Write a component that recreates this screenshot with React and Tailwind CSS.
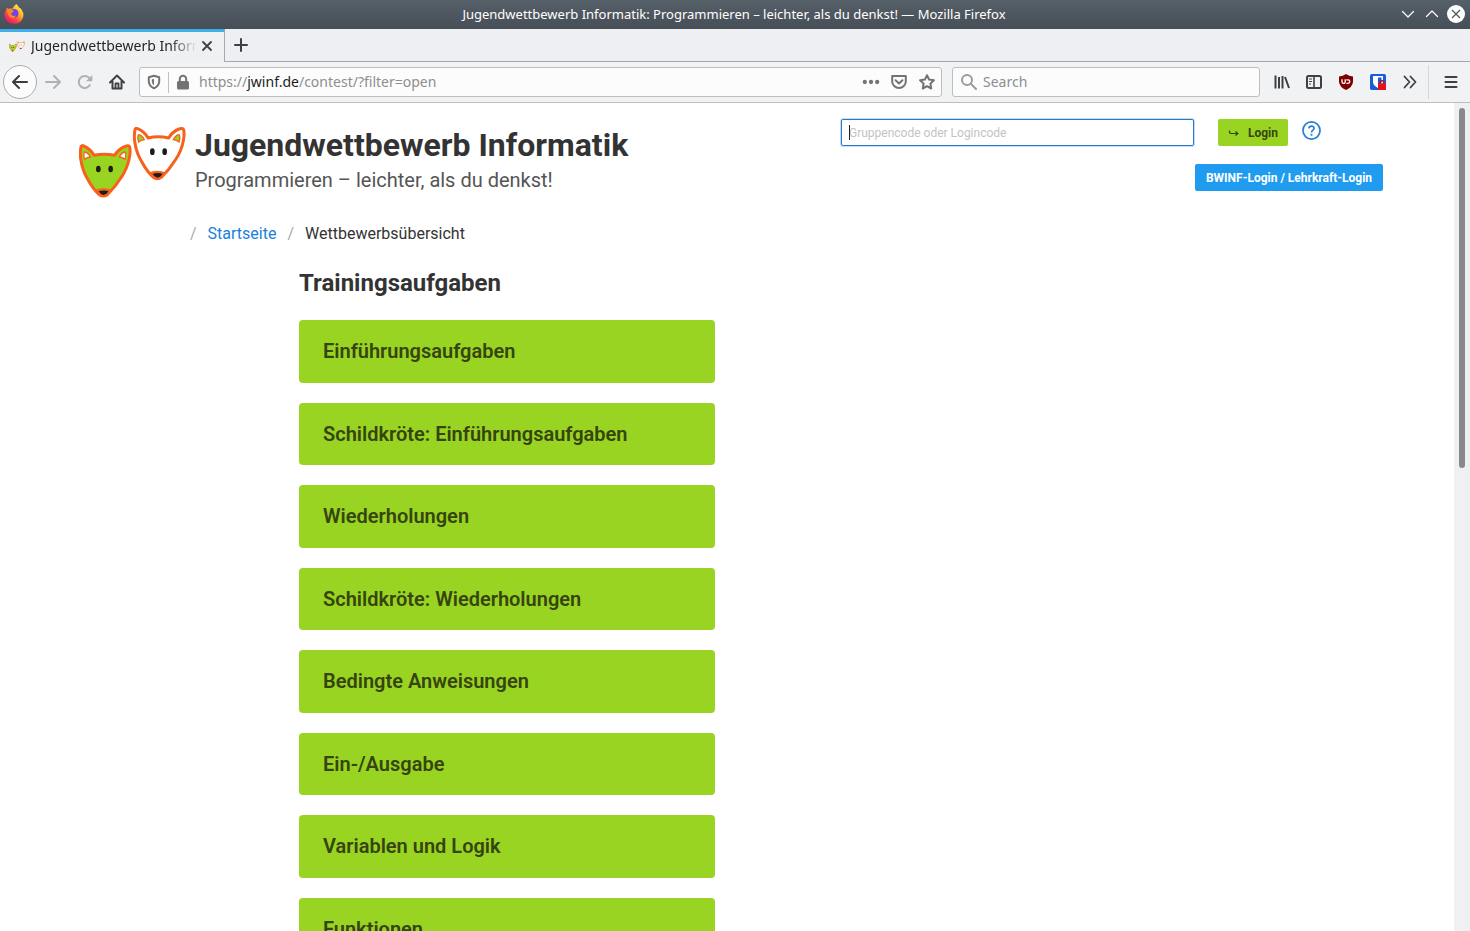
import React from "react";

const tasks = [
  "Einführungsaufgaben",
  "Schildkröte: Einführungsaufgaben",
  "Wiederholungen",
  "Schildkröte: Wiederholungen",
  "Bedingte Anweisungen",
  "Ein-/Ausgabe",
  "Variablen und Logik",
  "Funktionen",
];

function FoxHead({ fill, inner, x, y }) {
  return (
    <g transform={`translate(${x} ${y})`}>
      <path
        d="M6 6 Q2 30 6 48 Q11 79 27 105 Q43 134 61 150 Q73 158 85 150 Q109 127 127 98 Q146 69 151 40 Q155 20 152 7 Q150 1 138 5 Q117 14 107 32 Q76 25 45 32 Q34 12 14 4 Q8 1 6 6Z"
        fill={fill}
        stroke="#f8611c"
        strokeWidth="9"
        strokeLinejoin="round"
      />
      <path d="M17 44 Q12 28 17 22 Q28 24 34 37 Q24 38 17 44Z" fill={inner} stroke="#f8611c" strokeWidth="4" />
      <path d="M138 44 Q143 28 138 22 Q127 24 121 37 Q131 38 138 44Z" fill={inner} stroke="#f8611c" strokeWidth="4" />
      <path d="M46 136 Q73 125 100 136 Q88 150 73 154 Q58 150 46 136Z" fill="#f8611c" />
      <path d="M59 140 Q73 135 88 139 Q84 149 73 151 Q64 149 59 140Z" fill="#1c1c1c" />
      <ellipse cx="58" cy="73" rx="7" ry="10" fill="#1c1c1c" />
      <ellipse cx="95" cy="73" rx="7" ry="10" fill="#1c1c1c" />
    </g>
  );
}

function Foxes({ className }) {
  return (
    <svg viewBox="0 0 321 213" className={className} aria-hidden="true">
      <FoxHead fill="#99d422" inner="#fff" x={0} y={53} />
      <FoxHead fill="#fff" inner="#99d422" x={162} y={1} />
    </svg>
  );
}

function FirefoxLogo() {
  return (
    <svg viewBox="0 0 20 20" className="size-5" aria-hidden="true">
      <defs>
        <linearGradient id="ff-body" x1="0.85" y1="0.1" x2="0.2" y2="0.95">
          <stop offset="0" stopColor="#fff04a" />
          <stop offset="0.35" stopColor="#ffb028" />
          <stop offset="0.65" stopColor="#ff4a3d" />
          <stop offset="1" stopColor="#e5127c" />
        </linearGradient>
      </defs>
      <path
        d="M12.300 0 Q14 1 15 3.500 Q17 4 18 6.500 Q20 9 19.400 12 Q18 19.500 10.300 19.800 Q2 19.500 .6 12.500 Q0 8.500 2.200 5.500 L3 3.500 L4.500 5 Q6.500 4.200 8.500 4.800 Q9.500 2 12.300 0Z"
        fill="url(#ff-body)"
      />
      <circle cx="10" cy="9.500" r="4.500" fill="#7542e5" />
      <path d="M3.500 5 Q6 4 7.500 5.800 L10 7 Q9 8.500 7.500 8.800 Q6.500 10.500 8.200 11.600 Q10 12.300 12 11.500 Q11 14 9 14.200 Q5.500 14 4 10.800 Q3 8 3.500 5Z" fill="#ff8a1c" />
    </svg>
  );
}

function Icon({ children, className = "size-4" }) {
  return (
    <svg
      viewBox="0 0 16 16"
      className={className}
      fill="none"
      stroke="currentColor"
      strokeWidth="2"
      strokeLinecap="round"
      strokeLinejoin="round"
      aria-hidden="true"
    >
      {children}
    </svg>
  );
}

function ToolButton({ label, children, className = "text-[#3f4042]" }) {
  return (
    <button type="button" aria-label={label} className={`flex size-8 shrink-0 items-center justify-center ${className}`}>
      {children}
    </button>
  );
}

function FieldButton({ label, children }) {
  return (
    <button type="button" aria-label={label} className="flex h-7 w-7 shrink-0 items-center justify-center text-[#737373]">
      {children}
    </button>
  );
}

function TitleBar() {
  return (
    <div className="flex h-[29px] shrink-0 items-center bg-gradient-to-b from-[#566069] to-[#464e56] pb-px text-white">
      <div className="flex w-[72px] pl-1">
        <FirefoxLogo />
      </div>
      <div className="flex-1 truncate text-center text-[13px] leading-5">
        Jugendwettbewerb Informatik: Programmieren – leichter, als du denkst! — Mozilla Firefox
      </div>
      <div className="flex w-[74px] items-center">
        <button type="button" aria-label="Minimieren" className="flex w-6 justify-center">
          <Icon><path d="M2.500 5.500 8 11l5.500-5.500" strokeWidth="1.200" /></Icon>
        </button>
        <button type="button" aria-label="Maximieren" className="flex w-6 justify-center">
          <Icon><path d="M2.500 10.500 8 5l5.500 5.500" strokeWidth="1.200" /></Icon>
        </button>
        <button type="button" aria-label="Schließen" className="flex w-6 justify-center">
          <svg viewBox="0 0 18 18" className="size-[18px]" aria-hidden="true">
            <circle cx="9" cy="9" r="9" fill="#fff" />
            <path d="M5 5l8 8M13 5l-8 8" stroke="#4a535b" strokeWidth="1.200" />
          </svg>
        </button>
      </div>
    </div>
  );
}

function TabBar() {
  return (
    <div className="flex h-[33px] shrink-0 bg-[#eeeff2]">
      <div className="flex w-[225px] items-center border-t-3 border-r border-t-[#3daee9] border-r-[#a6a9ab] bg-[#eff0f2] pb-[2px] pl-[9px]">
        <Foxes className="h-[11px] w-4" />
        <div className="ml-[6px] w-[166px] overflow-hidden text-[14px] leading-5 whitespace-nowrap text-[#232629] [mask-image:linear-gradient(to_right,#000_84%,transparent)]">
          Jugendwettbewerb Informatik
        </div>
        <button type="button" aria-label="Tab schließen" className="flex w-5 justify-center text-[#3f4042]">
          <Icon className="size-4"><path d="M4 4l8 8M12 4l-8 8" strokeWidth="1.800" /></Icon>
        </button>
      </div>
      <div className="flex flex-1 items-center border-b border-[#a6a9ab]">
        <button type="button" aria-label="Neuer Tab" className="flex w-8 justify-center text-[#3f4042]">
          <Icon><path d="M8 2v12M2 8h12" /></Icon>
        </button>
      </div>
    </div>
  );
}

function ToolBar() {
  return (
    <div className="flex h-[41px] shrink-0 items-center border-b border-[#bcbec0] bg-[#f1f2f4] pr-[3px] pl-[3px]">
      <button type="button" aria-label="Zurück" className="flex size-[34px] shrink-0 items-center justify-center rounded-full border border-[#a9abad] bg-[#fcfcfc] text-[#3b3c3e]">
        <Icon><path d="M15 8H1.500M7 2 1 8l6 6" /></Icon>
      </button>
      <ToolButton label="Vor" className="text-[#b0b1b3]">
        <Icon><path d="M1 8h13.500M9 2l6 6-6 6" /></Icon>
      </ToolButton>
      <ToolButton label="Neu laden" className="text-[#b0b1b3]">
        <Icon><path d="M13.200 10.500A6 6 0 1 1 12.500 4.200" strokeLinecap="butt" strokeWidth="2" /><path d="M15.300 1v6.200H9z" fill="currentColor" stroke="none" /></Icon>
      </ToolButton>
      <ToolButton label="Startseite">
        <Icon><path d="M1 8.500 8 1.500 15 8.500M3.500 7v7.500h9V7" /><path d="M6.500 14V9.500h3V14" strokeWidth="1.800" /></Icon>
      </ToolButton>

      <div className="ml-[6px] flex h-[30px] flex-1 items-center rounded-[3px] border border-[#bcbec0] bg-[#fcfcfc]">
        <FieldButton label="Schutz">
          <Icon className="size-4">
            <path d="M8 1.800 13.200 3.300V7.500Q13 12 8 14.300 3 12 2.800 7.500V3.300Z" />
            <path d="M8 4.800v6.500Q6 10 5.800 7.500V5.400Z" fill="currentColor" stroke="none" />
          </Icon>
        </FieldButton>
        <div className="h-[21px] w-px bg-[#c0c1c3]" />
        <FieldButton label="Verbindung">
          <Icon className="size-4">
            <rect x="2" y="7" width="12" height="8.500" rx="1.500" fill="currentColor" stroke="none" />
            <path d="M4.800 8V5a3.200 3.200 0 0 1 6.400 0v3" />
          </Icon>
        </FieldButton>
        <div className="min-w-0 flex-1 truncate pl-[2px] text-[14px] leading-5 text-[#8c8e90]">
          https://<span className="text-[#1b1c1e]">jwinf.de</span>/contest/?filter=open
        </div>
        <FieldButton label="Seitenaktionen">
          <Icon className="size-[18px]"><g fill="currentColor" stroke="none"><circle cx="2.500" cy="8" r="1.900" /><circle cx="8" cy="8" r="1.900" /><circle cx="13.500" cy="8" r="1.900" /></g></Icon>
        </FieldButton>
        <FieldButton label="In Pocket speichern">
          <Icon><path d="M1.200 2h13.600v5.500A6.800 6.500 0 0 1 1.200 7.500ZM4.600 6.300 8 9.500l3.400-3.200" strokeWidth="2" /></Icon>
        </FieldButton>
        <FieldButton label="Lesezeichen">
          <Icon><path d="M8 1.200 10.100 5.600 14.900 6.200 11.400 9.600 12.200 14.500 8 12.200 3.800 14.500 4.600 9.600 1.100 6.200 5.900 5.600Z" strokeWidth="2" /></Icon>
        </FieldButton>
      </div>

      <label className="mx-[6px] ml-[10px] flex h-[30px] w-[308px] items-center rounded-[3px] border border-[#bcbec0] bg-[#fcfcfc] pl-2 text-[#9b9c9e]">
        <Icon><circle cx="6" cy="6" r="5" /><path d="M9.800 9.800 15 15" /></Icon>
        <input aria-label="Search" placeholder="Search" className="ml-[6px] min-w-0 flex-1 bg-transparent text-[14px] leading-5 outline-none placeholder:text-[#8c8e90]" />
      </label>

      <ToolButton label="Bibliothek">
        <Icon><path d="M1.500 1.500v13M5 3v11.500M8.500 2v12.500M11 3l4 11" strokeLinecap="butt" /></Icon>
      </ToolButton>
      <ToolButton label="Seitenleiste">
        <Icon><rect x="1" y="2" width="14" height="12" rx="1.500" /><path d="M8 2v12" strokeWidth="1.600" /><path d="M3 5h3M3 7.500h3M3 10h2" strokeWidth="1" strokeLinecap="butt" /></Icon>
      </ToolButton>
      <ToolButton label="uBlock">
        <Icon>
          <path d="M8 0Q11 2.200 15 2.500V8q-.5 5-7 8Q1.500 13 1 8V2.500Q5 2.200 8 0Z" fill="#800000" stroke="none" />
          <path d="M4 5.200v2.600a1.600 1.600 0 0 0 3.200 0V5.200M8.400 5.800H10a1.800 1.800 0 0 1 0 3.600H8.400" stroke="#fff" strokeWidth="1.300" strokeLinecap="butt" />
        </Icon>
      </ToolButton>
      <ToolButton label="Bitwarden">
        <Icon>
          <rect width="16" height="16" rx="1.800" fill="#175ddc" stroke="none" />
          <path d="M3 2h10v6.500q-.5 3-5 5.500-4.500-2.500-5-5.500Z" fill="#fff" stroke="none" />
          <path d="M8 3.500h3.500v4.800Q11 10.500 8 12.200Z" fill="#175ddc" stroke="none" />
          <path d="M10 10V8.800a2 2 0 0 1 4 0V10" stroke="#a3141c" strokeWidth="1.400" />
          <rect x="8" y="9.300" width="8" height="6.700" rx=".5" fill="#e5141c" stroke="none" />
        </Icon>
      </ToolButton>
      <ToolButton label="Weitere Werkzeuge">
        <Icon><path d="M2.500 2.500 7.500 8l-5 5.500M8.500 2.500l5 5.500-5 5.500" strokeWidth="1.800" /></Icon>
      </ToolButton>
      <div className="mr-[6px] ml-[2px] h-[34px] w-px bg-[#d5d6d8]" />
      <ToolButton label="Menü">
        <Icon><path d="M2.500 3h11M2.500 8h11M2.500 13h11" /></Icon>
      </ToolButton>
    </div>
  );
}

function PageHeader() {
  return (
    <header className="flex items-start justify-between pt-4 pr-[71px] pl-[79px]">
      <div className="flex pt-2">
        <Foxes className="h-[71px] w-[107px]" />
        <div className="ml-[9px]">
          <h1 className="text-[32px] leading-9 font-bold text-[#333]">Jugendwettbewerb Informatik</h1>
          <p className="text-[20px] leading-[34px] text-[#555]">Programmieren – leichter, als du denkst!</p>
        </div>
      </div>
      <div className="flex flex-col items-end gap-[18px]">
        <form className="flex w-[542px] items-start" onSubmit={(e) => e.preventDefault()}>
          <div className="relative">
            <input
              aria-label="Gruppencode oder Logincode"
              placeholder="Gruppencode oder Logincode"
              className="h-[27px] w-[353px] rounded-[2px] border border-[#2a78cd] px-[7px] text-[12px] leading-4 text-[#333] ring-1 ring-[#c5dcf5] outline-none placeholder:text-[#c3c3c3]"
            />
            <span className="absolute top-[6px] left-2 h-[15px] w-px bg-[#222]" />
          </div>
          <button type="submit" className="ml-6 flex h-[27px] w-[70px] items-center justify-center gap-2 rounded-[2px] bg-[#99d422] text-[12px] leading-4 font-bold text-[#36440f]">
            <svg viewBox="0 0 12 12" className="size-3" fill="none" stroke="currentColor" strokeWidth="1.200" aria-hidden="true">
              <path d="M1.500 3.500v1.200Q1.500 6.500 3.500 6.500h6M7.500 4.500l2.300 2-2.300 2" />
            </svg>
            Login
          </button>
          <a href="#hilfe" aria-label="Hilfe" className="ml-[14px] pt-[2px] text-[#2a7fd4]">
            <svg viewBox="0 0 20 20" className="size-[19px]" fill="none" stroke="currentColor" aria-hidden="true">
              <circle cx="10" cy="10" r="9" strokeWidth="1.800" />
              <path d="M7.300 7.800Q7.500 5.300 10 5.300T12.700 7.600Q12.700 8.800 11.200 9.900 10 10.800 10 12.200" strokeWidth="1.800" />
              <path d="M10 13.500v2" strokeWidth="2" />
            </svg>
          </a>
        </form>
        <a href="#lehrkraft" className="flex h-[27px] w-[188px] items-center justify-center rounded-[2px] bg-[#1f9cf0] text-[12px] leading-4 font-bold text-white">
          BWINF-Login / Lehrkraft-Login
        </a>
      </div>
    </header>
  );
}

export default function App() {
  return (
    <div className="flex h-screen flex-col overflow-hidden bg-white font-['Noto_Sans',sans-serif]">
      <TitleBar />
      <TabBar />
      <ToolBar />
      <div className="flex min-h-0 flex-1">
        <div className="min-w-0 flex-1 overflow-y-auto font-[Roboto,sans-serif] [scrollbar-width:none]">
          <PageHeader />
          <nav aria-label="Brotkrumen" className="mt-6 flex gap-[11px] pl-[190px] text-[16px] leading-6">
            <span className="text-[#aaa]">/</span>
            <a href="#start" className="text-[#1a7fdc]">Startseite</a>
            <span className="text-[#aaa]">/</span>
            <span className="text-[#333]">Wettbewerbsübersicht</span>
          </nav>
          <main className="ml-[299px] w-[416px] pt-[23px]">
            <h2 className="text-[24px] leading-7 font-bold text-[#333]">Trainingsaufgaben</h2>
            <div className="mt-[23px] box-content grid min-h-[640px] auto-rows-fr gap-5 pb-5">
              {tasks.map((t) => (
                <a key={t} href="#aufgabe" className="flex items-center rounded-[4px] bg-[#99d422] px-6 text-[20px] leading-6 font-semibold text-[#36440f]">
                  {t}
                </a>
              ))}
            </div>
          </main>
        </div>
        <div className="w-4 shrink-0 bg-[#eff0f2] pt-[5px] pl-[5px]">
          <div className="h-[360px] w-[6px] rounded-full bg-[#88898b]" />
        </div>
      </div>
    </div>
  );
}
